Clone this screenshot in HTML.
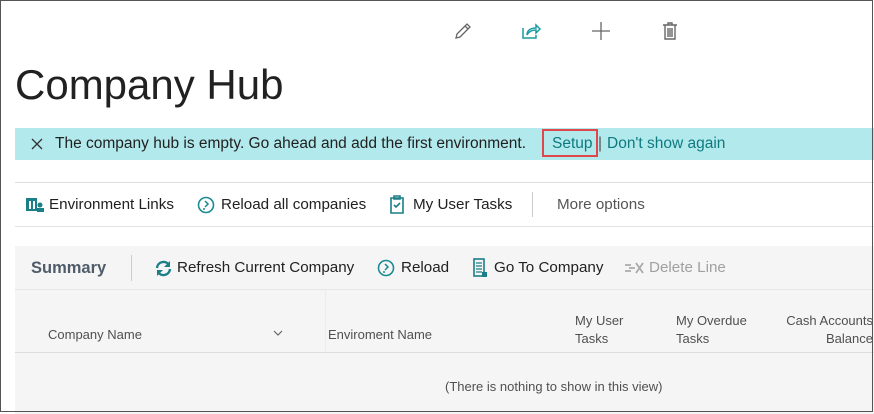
<!DOCTYPE html>
<html><head><style>
body{margin:0;width:874px;height:414px;overflow:hidden;background:#fff;font-family:"Liberation Sans",sans-serif;position:relative}
.a{position:absolute;white-space:nowrap}
.frame{position:absolute;left:0;top:0;width:871px;height:410px;border:1.5px solid #555;box-sizing:content-box}
.t{font-size:15.2px;color:#212121}
.h{font-size:13px;color:#505050}
</style></head><body>
<div class="a" style="left:15px;top:61px;font-size:42px;color:#212121">Company Hub</div>
<svg class="a" style="left:452px;top:20px" width="22" height="22" viewBox="0 0 22 22"><path d="M4 18l1-4L15 4l3 3L8 17z M13 6l3 3" fill="none" stroke="#666" stroke-width="1.3"/></svg>
<svg class="a" style="left:520px;top:20px" width="22" height="22" viewBox="0 0 22 22"><path d="M3 8v10h13v-3 M7 15c0-5 4-7 9-7V5l4 4-4 4v-3c-4 0-7 1-9 5" fill="none" stroke="#1a9ba1" stroke-width="1.5"/></svg>
<svg class="a" style="left:590px;top:20px" width="22" height="22" viewBox="0 0 22 22"><path d="M11 2v18M2 11h18" stroke="#666" stroke-width="1.3"/></svg>
<svg class="a" style="left:660px;top:20px" width="20" height="22" viewBox="0 0 20 22"><path d="M3 5h14M8 5V3h4v2M5 5v14h10V5M8 8v9M10 8v9M12 8v9" fill="none" stroke="#666" stroke-width="1.4"/></svg>
<div class="a" style="left:15px;top:128px;width:859px;height:32px;background:#b2e9ec"></div>
<svg class="a" style="left:30px;top:137px" width="14" height="14" viewBox="0 0 14 14"><path d="M2 2l10 10M12 2L2 12" stroke="#333" stroke-width="1.3"/></svg>
<div class="a" style="left:55px;top:135px;font-size:15.5px;color:#212121">The company hub is empty. Go ahead and add the first environment.</div>
<div class="a" style="left:542px;top:129px;width:56px;height:28px;border:2px solid #e0474c;box-sizing:border-box"></div>
<div class="a" style="left:552px;top:135px;font-size:15.5px;color:#0e7a7f">Setup</div>
<div class="a" style="left:598px;top:135px;font-size:15.5px;color:#555">|</div>
<div class="a" style="left:607px;top:135px;font-size:15.5px;color:#0e7a7f">Don't show again</div>
<div class="a" style="left:15px;top:182px;width:859px;height:1px;background:#ddd"></div>
<svg class="a" style="left:26px;top:197px" width="18" height="16" viewBox="0 0 18 16"><rect x="0" y="1" width="11" height="13" fill="#1a7f86"/><rect x="3" y="4" width="2" height="8" fill="#fff"/><rect x="7" y="4" width="2" height="8" fill="#fff"/><circle cx="14" cy="8" r="2.5" fill="#1a7f86"/><rect x="11" y="11" width="7" height="4" fill="#1a7f86"/></svg>
<div class="a t" style="left:49px;top:196px">Environment Links</div>
<svg class="a" style="left:197px;top:196px" width="18" height="18" viewBox="0 0 18 18"><circle cx="9" cy="9" r="7.5" fill="none" stroke="#1a8b91" stroke-width="1.6"/><path d="M8 5l3 3-3 3M6 13h2" fill="none" stroke="#1a8b91" stroke-width="1.5"/></svg>
<div class="a t" style="left:221px;top:196px">Reload all companies</div>
<svg class="a" style="left:389px;top:195px" width="16" height="19" viewBox="0 0 16 19"><path d="M2 3h12v15H2z M5 1h6v3H5z M5 10l2 2 4-4" fill="none" stroke="#1a7f86" stroke-width="1.6"/></svg>
<div class="a t" style="left:413px;top:196px">My User Tasks</div>
<div class="a" style="left:532px;top:192px;width:1px;height:25px;background:#ccc"></div>
<div class="a t" style="left:557px;top:196px;color:#555">More options</div>
<div class="a" style="left:15px;top:226px;width:859px;height:1px;background:#e2e2e2"></div>
<div class="a" style="left:15px;top:246px;width:859px;height:168px;background:#f5f5f5"></div>
<div class="a" style="left:15px;top:289px;width:859px;height:1px;background:#e6e6e6"></div>
<div class="a" style="left:31px;top:259px;font-size:16.5px;font-weight:bold;color:#505c6a">Summary</div>
<div class="a" style="left:131px;top:255px;width:1px;height:26px;background:#ccc"></div>
<svg class="a" style="left:155px;top:260px" width="17" height="17" viewBox="0 0 17 17"><path d="M2 8a6.5 6.5 0 0 1 12-3M15 9a6.5 6.5 0 0 1-12 3" fill="none" stroke="#1a7f86" stroke-width="2.4"/><path d="M15 1v6h-6zM2 16v-6h6z" fill="#1a7f86"/></svg>
<div class="a t" style="left:177px;top:259px">Refresh Current Company</div>
<svg class="a" style="left:377px;top:259px" width="18" height="18" viewBox="0 0 18 18"><circle cx="9" cy="9" r="7.5" fill="none" stroke="#1a8b91" stroke-width="1.6"/><path d="M8 5l3 3-3 3M6 13h2" fill="none" stroke="#1a8b91" stroke-width="1.5"/></svg>
<div class="a t" style="left:401px;top:259px">Reload</div>
<svg class="a" style="left:473px;top:258px" width="14" height="19" viewBox="0 0 14 19"><rect x="1" y="1" width="10" height="17" fill="none" stroke="#1a7f86" stroke-width="1.6"/><path d="M3 5h6M3 8h6M3 11h6M3 14h6" stroke="#1a7f86" stroke-width="1.2"/><rect x="9" y="14" width="5" height="5" fill="#1a7f86"/></svg>
<div class="a t" style="left:494px;top:259px">Go To Company</div>
<svg class="a" style="left:625px;top:261px" width="20" height="14" viewBox="0 0 20 14"><path d="M0 4h6M0 10h6M4 7h6M11 2l7 10M18 2l-7 10" stroke="#aaa" stroke-width="1.8"/></svg>
<div class="a t" style="left:649px;top:259px;color:#a0a0a0">Delete Line</div>
<div class="a" style="left:325px;top:290px;width:1px;height:62px;background:#ececec"></div>
<div class="a h" style="left:48px;top:327px">Company Name</div>
<svg class="a" style="left:272px;top:328px" width="12" height="10" viewBox="0 0 12 10"><path d="M2 3l4 4 4-4" fill="none" stroke="#666" stroke-width="1.2"/></svg>
<div class="a h" style="left:328px;top:327px">Enviroment Name</div>
<div class="a h" style="left:575px;top:312px;line-height:18px">My User<br>Tasks</div>
<div class="a h" style="left:676px;top:312px;line-height:18px">My Overdue<br>Tasks</div>
<div class="a h" style="left:785px;top:312px;line-height:18px;text-align:right;width:88px">Cash Accounts<br>Balance</div>
<div class="a" style="left:15px;top:352px;width:859px;height:1px;background:#ddd"></div>
<div class="a h" style="left:445px;top:379px">(There is nothing to show in this view)</div>
<div class="frame"></div>
</body></html>
